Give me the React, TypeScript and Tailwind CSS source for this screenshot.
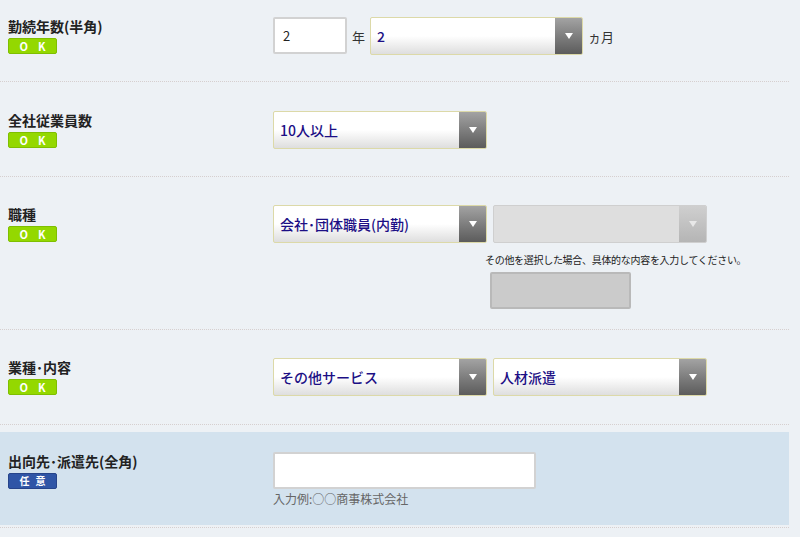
const font = "font-['Noto_Sans_CJK_JP','Noto_Sans',sans-serif]";

function Badge({ kind }: { kind: 'ok' | 'optional' }) {
  if (kind === 'ok') {
    return (
      <div className="mt-[3px] flex h-[16px] w-[49px] items-center justify-center gap-[10px] rounded-[2px] border border-[#7fbf00] bg-[#94d800] text-[11px] font-bold leading-none text-white">
        <span>O</span>
        <span>K</span>
      </div>
    );
  }
  return (
    <div className="mt-[3px] flex h-[16px] w-[49px] items-center justify-center gap-[6px] rounded-[2px] border border-[#26448a] bg-[#2f55a6] text-[10px] font-bold leading-none text-white">
      <span>任</span>
      <span>意</span>
    </div>
  );
}

function Label({ text, badge }: { text: string; badge: 'ok' | 'optional' }) {
  return (
    <div className="w-[273px] shrink-0 pl-2 pt-[1px]">
      <div className="text-[14px] font-bold leading-[17px] text-[#222]">{text}</div>
      <Badge kind={badge} />
    </div>
  );
}

function Select({ value, width = 'w-[214px]', disabled = false }: { value: string; width?: string; disabled?: boolean }) {
  return (
    <div
      className={`flex h-[38px] ${width} overflow-hidden rounded-[2px] border ${
        disabled ? 'border-[#cfcfcf] bg-[#dedede]' : 'border-[#dcd9a8] bg-gradient-to-b from-white from-50% to-[#dedede]'
      }`}
    >
      <div className="flex flex-1 items-center pl-[6px] text-[14px] font-medium text-[#1c0f85]">{value}</div>
      <div
        className={`flex w-[27px] items-center justify-center bg-gradient-to-b ${
          disabled ? 'from-[#cfcfcf] to-[#b5b5b5]' : 'from-[#a3a3a3] to-[#5c5c5c]'
        }`}
      >
        <svg width="8" height="6" viewBox="0 0 8 6">
          <path d="M0 0h8L4 6z" fill={disabled ? '#e8e8e8' : '#ffffff'} />
        </svg>
      </div>
    </div>
  );
}

function TextInput({ value = '', width }: { value?: string; width: string }) {
  return (
    <div className={`flex h-[37px] ${width} items-center rounded-[2px] border-2 border-[#d2d2d2] bg-white pl-[8px] text-[13px] text-[#222]`}>
      {value}
    </div>
  );
}

export default function App() {
  return (
    <div className={`min-h-[537px] w-[800px] bg-[#edf1f5] ${font}`}>
      <div className="w-[789px]">
        {/* 勤続年数 */}
        <div className="flex h-[82px] border-b border-dotted border-[#d6cfcf] pt-[17px]">
          <Label text="勤続年数(半角)" badge="ok" />
          <div className="flex items-start gap-[5px]">
            <TextInput value="2" width="w-[74px]" />
            <span className="mt-[10px] text-[13px] text-[#333]">年</span>
            <Select value="2" width="w-[213px]" />
            <span className="mt-[10px] text-[13px] text-[#333]">ヵ月</span>
          </div>
        </div>

        {/* 全社従業員数 */}
        <div className="flex h-[95px] border-b border-dotted border-[#d6cfcf] pt-[29px]">
          <Label text="全社従業員数" badge="ok" />
          <Select value="10人以上" />
        </div>

        {/* 職種 */}
        <div className="flex h-[153px] border-b border-dotted border-[#d6cfcf] pt-[28px]">
          <Label text="職種" badge="ok" />
          <div className="flex flex-col">
            <div className="flex gap-[6px]">
              <Select value="会社･団体職員(内勤)" />
              <Select value="" disabled />
            </div>
            <div className="ml-[212px] mt-[11px] text-[10px] leading-[12px] tracking-[-0.3px] text-[#222]">
              その他を選択した場合、具体的な内容を入力してください。
            </div>
            <div className="ml-[217px] mt-[6px] h-[37px] w-[141px] rounded-[2px] border-2 border-[#b9b9b9] bg-[#cbcbcb]" />
          </div>
        </div>

        {/* 業種・内容 */}
        <div className="flex h-[95px] border-b border-dotted border-[#d6cfcf] pt-[28px]">
          <Label text="業種･内容" badge="ok" />
          <div className="flex gap-[6px]">
            <Select value="その他サービス" />
            <Select value="人材派遣" />
          </div>
        </div>

        {/* 出向先・派遣先 */}
        <div className="mt-[7px] border-b border-dotted border-[#d6cfcf] pb-[2px]">
          <div className="flex h-[93px] bg-[#d3e2ee] pt-[20px]">
            <Label text="出向先･派遣先(全角)" badge="optional" />
            <div className="flex flex-col">
              <TextInput width="w-[263px]" />
              <div className="mt-[2px] text-[12px] leading-[15px] text-[#666]">入力例:○○商事株式会社</div>
            </div>
          </div>
        </div>
      </div>
    </div>
  );
}
